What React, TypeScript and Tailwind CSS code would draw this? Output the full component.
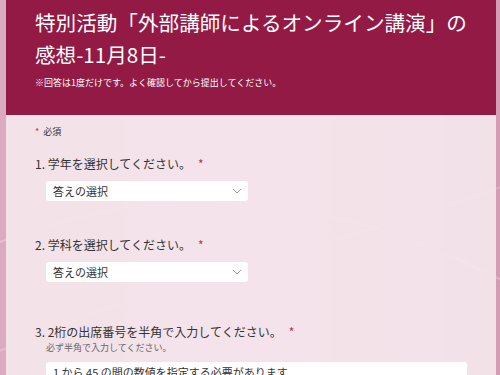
const font = { fontFamily: '"Noto Sans CJK JP", "Noto Sans", sans-serif' };

function Required() {
  return <span className="ml-[7px] text-[#c4314b]">*</span>;
}

function Chevron() {
  return (
    <svg width="12" height="12" viewBox="0 0 12 12" className="text-[#8a8a8a]">
      <path d="M2 4l4 4 4-4" fill="none" stroke="currentColor" strokeWidth="0.9" />
    </svg>
  );
}

function SelectBox() {
  return (
    <div className="ml-[11px] flex h-[20px] w-[202px] items-center justify-between rounded-[3px] bg-white pl-[7px] pr-[5px]">
      <span className="text-[11px] leading-none text-[#333]">答えの選択</span>
      <Chevron />
    </div>
  );
}

function Question({ num, text }: { num: number; text: string }) {
  return (
    <p className="text-[12px] leading-[16px] text-[#333]">
      {num}. {text}
      <Required />
    </p>
  );
}

export default function App() {
  return (
    <div
      style={font}
      className="relative h-[375px] w-[500px] overflow-hidden bg-gradient-to-r from-[#dcaac0] via-[#e6c3d2] to-[#d49cb3] px-[6px]"
    >
      <svg
        className="absolute inset-0"
        width="500"
        height="375"
        viewBox="0 0 500 375"
      >
        <path d="M-20 250 C 120 190, 300 170, 520 290" fill="none" stroke="#ffffff" strokeOpacity="0.25" strokeWidth="2" />
        <path d="M-20 360 C 150 280, 330 250, 520 180" fill="none" stroke="#ffffff" strokeOpacity="0.2" strokeWidth="2" />
      </svg>
      <div className="relative h-full w-[490px]">
        <header className="h-[115px] bg-[#921a45] pl-[29px] pr-[8px] pt-[6px]">
          <h1 className="text-[20.6px] leading-[32px] text-white">
            特別活動「外部講師によるオンライン講演」の
            <br />
            感想-11月8日-
          </h1>
          <p className="mt-[7px] text-[9px] leading-[12px] text-white">
            ※回答は1度だけです。よく確認してから提出してください。
          </p>
        </header>
        <main className="h-[260px] bg-[#f4e5eb]/95 px-[29px] pt-[11px]">
          <p className="text-[9px] leading-[12px] text-[#333]">
            <span className="mr-1 text-[#c4314b]">*</span>必須
          </p>
          <div className="mt-[18px] flex flex-col gap-[9px]">
            <Question num={1} text="学年を選択してください。" />
            <SelectBox />
          </div>
          <div className="mt-[36px] flex flex-col gap-[9px]">
            <Question num={2} text="学科を選択してください。" />
            <SelectBox />
          </div>
          <div className="mt-[42px]">
            <Question num={3} text="2桁の出席番号を半角で入力してください。" />
            <p className="ml-[11px] mt-[2px] text-[9px] leading-[12px] text-[#666]">
              必ず半角で入力してください。
            </p>
            <div className="ml-[11px] mt-[8px] h-[24px] w-[421px] rounded-[3px] bg-white pl-[7px] pt-[5px] text-[11px] leading-none text-[#333]">
              1 から 45 の間の数値を指定する必要があります
            </div>
          </div>
        </main>
      </div>
    </div>
  );
}
